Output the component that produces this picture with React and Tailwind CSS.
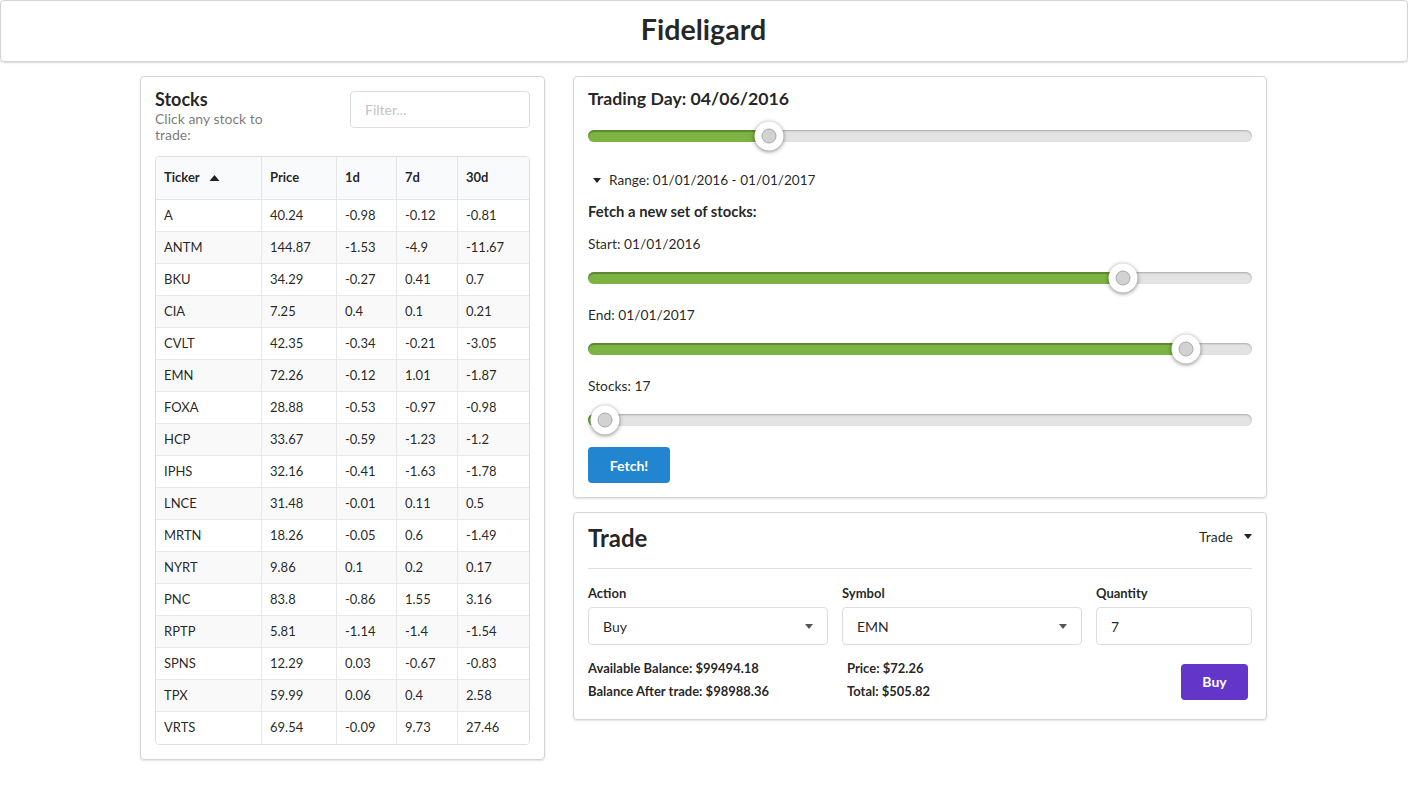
import React from 'react'

const stocks = [
  ['A', '40.24', '-0.98', '-0.12', '-0.81'],
  ['ANTM', '144.87', '-1.53', '-4.9', '-11.67'],
  ['BKU', '34.29', '-0.27', '0.41', '0.7'],
  ['CIA', '7.25', '0.4', '0.1', '0.21'],
  ['CVLT', '42.35', '-0.34', '-0.21', '-3.05'],
  ['EMN', '72.26', '-0.12', '1.01', '-1.87'],
  ['FOXA', '28.88', '-0.53', '-0.97', '-0.98'],
  ['HCP', '33.67', '-0.59', '-1.23', '-1.2'],
  ['IPHS', '32.16', '-0.41', '-1.63', '-1.78'],
  ['LNCE', '31.48', '-0.01', '0.11', '0.5'],
  ['MRTN', '18.26', '-0.05', '0.6', '-1.49'],
  ['NYRT', '9.86', '0.1', '0.2', '0.17'],
  ['PNC', '83.8', '-0.86', '1.55', '3.16'],
  ['RPTP', '5.81', '-1.14', '-1.4', '-1.54'],
  ['SPNS', '12.29', '0.03', '-0.67', '-0.83'],
  ['TPX', '59.99', '0.06', '0.4', '2.58'],
  ['VRTS', '69.54', '-0.09', '9.73', '27.46'],
]

const cols = ['w-[106px]', 'w-[75px]', 'w-[60px]', 'w-[61px]', 'flex-1']

function Caret({ up = false, className = '' }) {
  return (
    <svg width="10" height="6" viewBox="0 0 10 6" className={className}>
      <polygon points={up ? '0,6 10,6 5,0' : '0,0 10,0 5,6'} fill="currentColor" />
    </svg>
  )
}

function Slider({ pct }) {
  return (
    <div className="h-[30px] flex items-center">
      <div className="relative w-full h-[12px] rounded-full bg-[#e3e3e3] shadow-[inset_0_1px_2px_rgba(0,0,0,0.25)]">
        <div
          className="absolute left-0 top-0 h-full rounded-full bg-[#7cb342] shadow-[inset_0_2px_1px_rgba(0,0,0,0.25)]"
          style={{ width: `${pct}%` }}
        />
        <div
          className="absolute top-1/2 -translate-x-1/2 -translate-y-1/2 w-[29px] h-[29px] rounded-full bg-white shadow-[0_1px_4px_rgba(0,0,0,0.5)] flex items-center justify-center"
          style={{ left: `${pct}%` }}
        >
          <div className="w-[15px] h-[15px] rounded-full bg-[#d2d2d2] border border-[#a9a9a9]" />
        </div>
      </div>
    </div>
  )
}

function SelectBox({ value, className = '' }) {
  return (
    <div className={`h-[38px] rounded-[4px] border border-[#dedede] bg-white flex items-center justify-between pl-[14px] pr-[14px] text-[14px] ${className}`}>
      <span>{value}</span>
      <Caret className="text-[#555] w-[8px] h-[5px]" />
    </div>
  )
}

export default function App() {
  return (
    <div className="min-h-screen bg-white text-[rgba(0,0,0,0.87)] font-['Lato','Liberation_Sans',sans-serif]">
      <div className="h-[62px] border border-[#d4d4d5] rounded-[4px] shadow-[0_1px_2px_rgba(0,0,0,0.15)] flex items-center justify-center">
        <h1 className="text-[28.6px] font-bold leading-none -mt-[3px] mr-[1px]">Fideligard</h1>
      </div>

      <div className="w-[1128px] mx-auto mt-[14px] flex gap-[28px] items-start">
        {/* stocks panel */}
        <div className="w-[405px] border border-[#d4d4d5] rounded-[4px] shadow-[0_1px_2px_rgba(0,0,0,0.12)] px-[14px] pt-[12px] pb-[14px]">
          <div className="flex justify-between h-[67px]">
            <div>
              <div className="text-[18px] font-bold leading-[18px] mt-[1px]">Stocks</div>
              <div className="text-[14px] leading-[16px] text-[rgba(0,0,0,0.55)] w-[130px] mt-[3px]">
                Click any stock to trade:
              </div>
            </div>
            <div className="w-[180px] h-[37px] mt-[2px] border border-[#dedede] rounded-[4px] flex items-center px-[14px] text-[14px] text-[#c4c4c4]">
              Filter...
            </div>
          </div>
          <div className="border border-[#dedede] rounded-[4px] overflow-hidden text-[13px]">
            <div className="flex h-[43px] bg-[#f9fafb] font-bold border-b border-[#e4e4e4]">
              {['Ticker', 'Price', '1d', '7d', '30d'].map((h, i) => (
                <div key={h} className={`${cols[i]} flex items-center px-[8px] ${i < 4 ? 'border-r border-[#e4e4e4]' : ''}`}>
                  {h}
                  {i === 0 && <Caret up className="ml-[9px] w-[11px] h-[6px] text-[#222]" />}
                </div>
              ))}
            </div>
            {stocks.map((row, r) => (
              <div
                key={row[0]}
                className={`flex h-[32px] ${r % 2 === 1 ? 'bg-[#f9f9f9]' : 'bg-white'} ${r < stocks.length - 1 ? 'border-b border-[#e8e8e8]' : ''}`}
              >
                {row.map((c, i) => (
                  <div key={i} className={`${cols[i]} flex items-center px-[8px] ${i < 4 ? 'border-r border-[#e8e8e8]' : ''}`}>
                    {c}
                  </div>
                ))}
              </div>
            ))}
          </div>
        </div>

        {/* right column */}
        <div className="w-[694px] flex flex-col gap-[14px]">
          <div className="border border-[#d4d4d5] rounded-[4px] shadow-[0_1px_2px_rgba(0,0,0,0.12)] px-[14px] pt-[11px] pb-[14px]">
            <div className="text-[17.7px] font-bold leading-[22px]">Trading Day: 04/06/2016</div>
            <div className="mt-[11px]">
              <Slider pct={27.3} />
            </div>
            <div className="mt-[19px] leading-[20px] text-[13.6px] flex items-center">
              <Caret className="ml-[5px] mr-[8px] w-[8px] h-[5px] text-[#222]" />
              Range: 01/01/2016 - 01/01/2017
            </div>
            <div className="mt-[11px] leading-[20px] text-[14.8px] font-bold">Fetch a new set of stocks:</div>
            <div className="mt-[13px] leading-[20px] text-[13.8px]">Start: 01/01/2016</div>
            <div className="mt-[9px]">
              <Slider pct={80.6} />
            </div>
            <div className="mt-[12px] leading-[20px] text-[13.8px]">End: 01/01/2017</div>
            <div className="mt-[9px]">
              <Slider pct={90} />
            </div>
            <div className="mt-[12px] leading-[20px] text-[13.8px]">Stocks: 17</div>
            <div className="mt-[9px]">
              <Slider pct={2.6} />
            </div>
            <button className="mt-[12px] h-[36px] w-[82px] rounded-[4px] bg-[#2185d0] text-white text-[14px] font-bold">
              Fetch!
            </button>
          </div>

          <div className="border border-[#d4d4d5] rounded-[4px] shadow-[0_1px_2px_rgba(0,0,0,0.12)] px-[14px] pt-[10px] pb-[18px]">
            <div className="flex items-center justify-between h-[30px]">
              <div className="text-[24px] font-bold leading-[30px]">Trade</div>
              <div className="flex items-center text-[14px] -mt-[3px]">
                Trade
                <Caret className="ml-[11px] w-[8px] h-[5px] text-[#222]" />
              </div>
            </div>
            <div className="mt-[15px] border-t border-[#dedede]" />
            <div className="mt-[15px] flex gap-[14px]">
              <div className="w-[240px]">
                <div className="text-[13px] font-bold leading-[18px]">Action</div>
                <SelectBox value="Buy" className="mt-[5px]" />
              </div>
              <div className="w-[240px]">
                <div className="text-[13px] font-bold leading-[18px]">Symbol</div>
                <SelectBox value="EMN" className="mt-[5px]" />
              </div>
              <div className="flex-1">
                <div className="text-[13px] font-bold leading-[18px]">Quantity</div>
                <div className="mt-[5px] h-[38px] rounded-[4px] border border-[#dedede] flex items-center px-[14px] text-[14px]">
                  7
                </div>
              </div>
            </div>
            <div className="mt-[13px] flex items-center text-[13px] font-bold">
              <div className="w-[259px] flex flex-col gap-[3px] leading-[20px]">
                <div>Available Balance: $99494.18</div>
                <div>Balance After trade: $98988.36</div>
              </div>
              <div className="flex-1 flex flex-col gap-[3px] leading-[20px]">
                <div>Price: $72.26</div>
                <div>Total: $505.82</div>
              </div>
              <button className="mr-[4px] mt-[4px] h-[36px] w-[67px] rounded-[4px] bg-[#6435c9] text-white text-[14px] font-bold">
                Buy
              </button>
            </div>
          </div>
        </div>
      </div>
    </div>
  )
}
